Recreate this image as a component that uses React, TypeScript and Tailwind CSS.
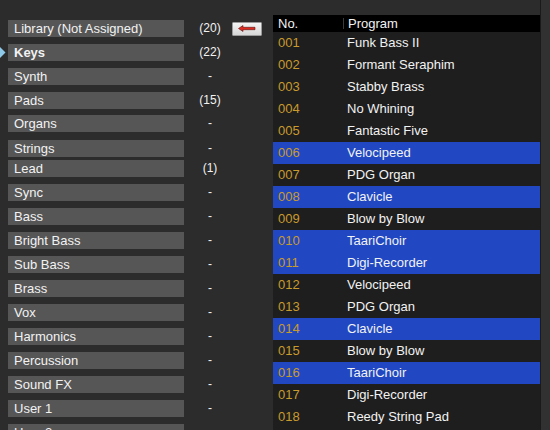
const categories = [
  { name: 'Library (Not Assigned)', count: '(20)', mt: 'mt-0' },
  { name: 'Keys', count: '(22)', mt: 'mt-[7px]', active: true },
  { name: 'Synth', count: '-', mt: 'mt-[7px]' },
  { name: 'Pads', count: '(15)', mt: 'mt-[7px]' },
  { name: 'Organs', count: '-', mt: 'mt-[6px]' },
  { name: 'Strings', count: '-', mt: 'mt-[8px]' },
  { name: 'Lead', count: '(1)', mt: 'mt-[3px]' },
  { name: 'Sync', count: '-', mt: 'mt-[7px]' },
  { name: 'Bass', count: '-', mt: 'mt-[7px]' },
  { name: 'Bright Bass', count: '-', mt: 'mt-[7px]' },
  { name: 'Sub Bass', count: '-', mt: 'mt-[7px]' },
  { name: 'Brass', count: '-', mt: 'mt-[7px]' },
  { name: 'Vox', count: '-', mt: 'mt-[7px]' },
  { name: 'Harmonics', count: '-', mt: 'mt-[7px]' },
  { name: 'Percussion', count: '-', mt: 'mt-[7px]' },
  { name: 'Sound FX', count: '-', mt: 'mt-[7px]' },
  { name: 'User 1', count: '-', mt: 'mt-[7px]' },
  { name: 'User 2', count: '-', mt: 'mt-[7px]' },
];

const programs = [
  { no: '001', name: 'Funk Bass II' },
  { no: '002', name: 'Formant Seraphim' },
  { no: '003', name: 'Stabby Brass' },
  { no: '004', name: 'No Whining' },
  { no: '005', name: 'Fantastic Five' },
  { no: '006', name: 'Velocipeed', sel: true },
  { no: '007', name: 'PDG Organ' },
  { no: '008', name: 'Clavicle', sel: true },
  { no: '009', name: 'Blow by Blow' },
  { no: '010', name: 'TaariChoir', sel: true },
  { no: '011', name: 'Digi-Recorder', sel: true },
  { no: '012', name: 'Velocipeed' },
  { no: '013', name: 'PDG Organ' },
  { no: '014', name: 'Clavicle', sel: true },
  { no: '015', name: 'Blow by Blow' },
  { no: '016', name: 'TaariChoir', sel: true },
  { no: '017', name: 'Digi-Recorder' },
  { no: '018', name: 'Reedy String Pad' },
  { no: '019', name: 'Velocipeed' },
];

function ArrowButton() {
  return (
    <button className="ml-[2px] flex h-[14px] w-[30px] items-center justify-center rounded-[1px] border border-[#9a9a9a] bg-gradient-to-b from-[#f4f4f4] to-[#d6d6d6]">
      <svg width="18" height="7" viewBox="0 0 18 7">
        <path d="M0.5 3.5 L5 0.5 L5 2.3 L17 2.3 L17 4.7 L5 4.7 L5 6.5 Z" fill="#e02a1f" stroke="#5a1410" strokeWidth="0.6" />
      </svg>
    </button>
  );
}

export default function App() {
  return (
    <div className="flex h-[430px] w-[550px] overflow-hidden bg-[#2c2c2c] font-['Liberation_Sans',Arial,sans-serif] text-[#f2f2f2]">
      {/* categories */}
      <div className="flex w-[273px] flex-col pt-[20px]">
        {categories.map((c, i) => (
          <div key={c.name} className={`flex h-[17px] shrink-0 items-center ${c.mt}`}>
            <div className="flex w-[8px] items-center">
              {c.active && (
                <svg width="6" height="11" viewBox="0 0 6 11">
                  <path d="M0 0 L5.5 5.5 L0 11 Z" fill="#8fc9ea" />
                </svg>
              )}
            </div>
            <div
              className={`h-[17px] w-[176px] bg-[#565656] pl-[6px] text-[13px] leading-[17px] ${
                c.active ? 'font-bold' : ''
              }`}
            >
              {c.name}
            </div>
            <div className="w-[46px] pl-[6px] text-center text-[12px] leading-[17px]">{c.count}</div>
            {i === 0 && <ArrowButton />}
          </div>
        ))}
      </div>

      {/* program table */}
      <div className="mt-[15px] flex w-[267px] flex-col bg-[#1e1e1e]">
        <div className="flex h-[17px] shrink-0 items-center bg-black text-[13px] leading-[17px]">
          <div className="w-[70px] pl-[5px]">No.</div>
          <div className="h-[11px] w-px bg-[#3a3a3a]" />
          <div className="pl-[4px]">Program</div>
        </div>
        {programs.map((p) => (
          <div
            key={p.no}
            className={`flex h-[22px] shrink-0 items-center text-[13px] leading-[22px] ${
              p.sel ? 'bg-[#2148c2]' : 'bg-[#1e1e1e]'
            }`}
          >
            <div className="w-[74px] pl-[5px] text-[#c99a2c]">{p.no}</div>
            <div>{p.name}</div>
          </div>
        ))}
      </div>

      {/* scrollbar strip */}
      <div className="w-[10px] border-l border-[#1a1a1a] bg-[#313131]" />
    </div>
  );
}
